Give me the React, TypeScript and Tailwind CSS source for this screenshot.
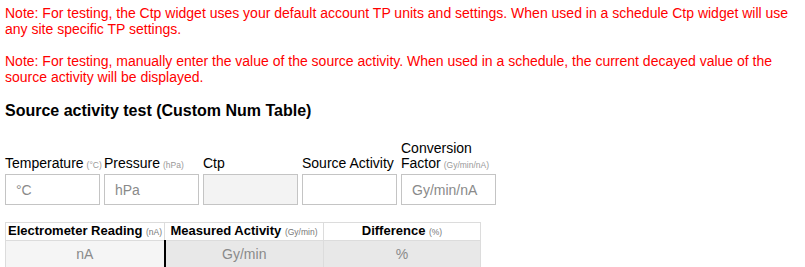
import React from "react";

const fields = [
  { label: "Temperature", unit: "(°C)", placeholder: "°C", disabled: false },
  { label: "Pressure", unit: "(hPa)", placeholder: "hPa", disabled: false },
  { label: "Ctp", unit: "", placeholder: "", disabled: true },
  { label: "Source Activity", unit: "", placeholder: "", disabled: false },
  { label: "Conversion Factor", unit: "(Gy/min/nA)", placeholder: "Gy/min/nA", disabled: false },
];

const App = () => {
  return (
    <div className="min-h-screen bg-white px-[5px] pt-[5px] font-['Liberation_Sans',Arial,sans-serif] text-black">
      {/* Notes */}
      <p className="text-[14px] leading-[16px] text-[#ff0000]">
        Note: For testing, the Ctp widget uses your default account TP units and settings. When used in a schedule Ctp widget will use any site specific TP settings.
      </p>
      <p className="mt-[16px] text-[14px] leading-[16px] text-[#ff0000]">
        Note: For testing, manually enter the value of the source activity. When used in a schedule, the current decayed value of the source activity will be displayed.
      </p>

      <h2 className="mt-[17px] text-[16px] font-bold leading-[18px]">Source activity test (Custom Num Table)</h2>

      {/* Inputs */}
      <div className="mt-[21px] flex items-end gap-[4px]">
        {fields.map((f) => (
          <div key={f.label} className="flex w-[95px] flex-col">
            <label className="text-[14px] leading-[15px]">
              {f.label === "Conversion Factor" ? (
                <>
                  Conversion
                  <br />
                  Factor
                </>
              ) : (
                f.label
              )}
              {f.unit && (
                <span className="ml-[3px] text-[8.5px] leading-none text-[#999]">{f.unit}</span>
              )}
            </label>
            <input
              type="text"
              disabled={f.disabled}
              placeholder={f.placeholder}
              className={`mt-[3px] h-[31px] w-[95px] border border-[#c4c4c4] px-[10px] text-[14px] placeholder:text-[#8a8a8a] focus:outline-none ${
                f.disabled ? "bg-[#f3f3f3]" : "bg-white"
              }`}
            />
          </div>
        ))}
      </div>

      {/* Table */}
      <table className="mt-[17px] w-[476px] table-fixed border-collapse text-center">
        <thead>
          <tr className="h-[18px]">
            <th className="w-[159px] border border-[#dcdcdc] pl-[2px] text-left text-[13px] font-bold leading-[16px] whitespace-nowrap">
              Electrometer Reading <span className="text-[8.5px] font-normal text-[#777]">(nA)</span>
            </th>
            <th className="w-[159px] border border-[#dcdcdc] text-[13px] font-bold leading-[16px] whitespace-nowrap">
              Measured Activity <span className="text-[8.5px] font-normal text-[#777]">(Gy/min)</span>
            </th>
            <th className="border border-[#dcdcdc] text-[13px] font-bold leading-[16px] whitespace-nowrap">
              Difference <span className="text-[8.5px] font-normal text-[#777]">(%)</span>
            </th>
          </tr>
        </thead>
        <tbody>
          <tr className="h-[28px]">
            <td className="border border-[#dcdcdc] border-r-2 border-r-black bg-[#f5f5f5] text-[14px] text-[#8a8a8a]">nA</td>
            <td className="border border-[#dcdcdc] bg-[#e8e8e8] text-[14px] text-[#8a8a8a]">Gy/min</td>
            <td className="border border-[#dcdcdc] bg-[#e8e8e8] text-[14px] text-[#8a8a8a]">%</td>
          </tr>
        </tbody>
      </table>
    </div>
  );
};

export default App;
